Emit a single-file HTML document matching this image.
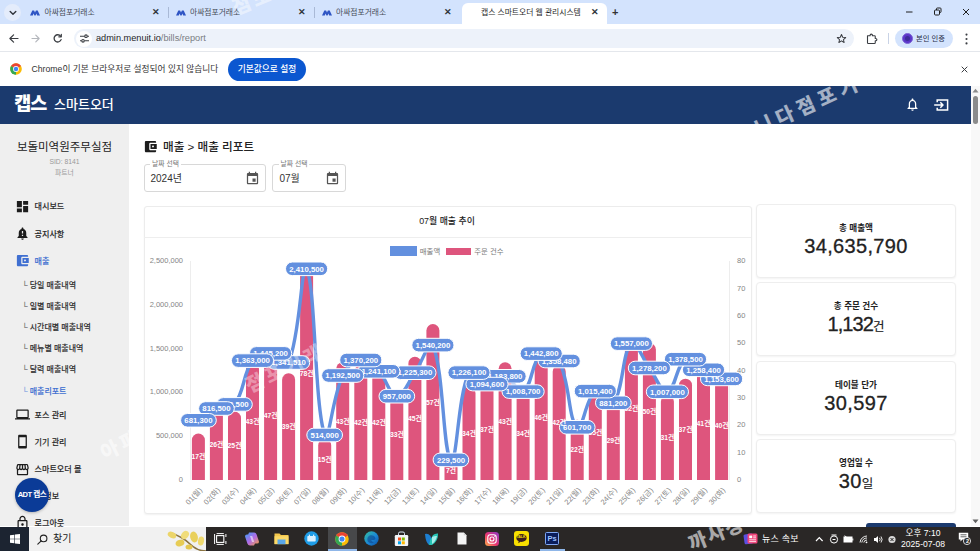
<!DOCTYPE html>
<html lang="ko">
<head>
<meta charset="utf-8">
<title>캡스 스마트오더 웹 관리시스템</title>
<style>
*{box-sizing:border-box;margin:0;padding:0}
html,body{width:980px;height:551px;overflow:hidden;background:#fff}
body{font-family:"Liberation Sans","Noto Sans CJK KR",sans-serif;color:#222;position:relative}
.abs{position:absolute}
svg{overflow:visible}
/* ---------- browser chrome ---------- */
#tabbar{left:0;top:0;width:980px;height:25px;background:#d3e3fd}
.tab{position:absolute;top:0;height:25px;font-size:7.8px;color:#474c57;line-height:25px;white-space:nowrap}
.tabx{position:absolute;top:0;height:25px;line-height:25px;font-size:8.5px;color:#30343b;font-weight:bold}
.tsep{position:absolute;top:7px;width:1px;height:11px;background:#a9b9d6}
#acttab{left:462px;top:3px;width:145px;height:22px;background:#fff;border-radius:6px 6px 0 0}
#toolbar{left:0;top:24px;width:980px;height:27px;background:#fff}
#urlpill{left:74px;top:29px;width:780px;height:19px;border-radius:10px;background:#edf2fa}
#url{left:96px;top:28px;height:21px;line-height:21px;font-size:9.2px;color:#1f1f1f;white-space:nowrap}
#url span{color:#7a7d83}
#infobar{left:0;top:51px;width:980px;height:35px;background:#fff;border-top:1px solid #e4e7ec}
#infotxt{left:31.5px;top:53px;height:33px;line-height:33px;font-size:8.7px;color:#333;white-space:nowrap}
#defbtn{left:228px;top:58px;width:78px;height:22.5px;border-radius:11.5px;background:#0b57d0;color:#fff;font-size:8.7px;line-height:22.5px;text-align:center;font-weight:500;white-space:nowrap}
#prof{left:895px;top:29px;width:58px;height:19px;border-radius:10px;background:#d3e3fd}
#proftxt{left:916px;top:29px;height:19px;line-height:19px;font-size:7.3px;color:#1d2a44;white-space:nowrap}
/* ---------- app ---------- */
#apphead{left:0;top:86px;width:971px;height:38px;background:#1b3a6e}
#logo1{left:14.3px;top:92px;font-size:18.5px;font-weight:900;color:#fff;line-height:24px;letter-spacing:-1px;font-family:"Liberation Sans","Noto Sans CJK KR",sans-serif}
#logo2{left:54px;top:94px;font-size:13px;color:#fff;line-height:22px;font-weight:500;font-family:"Liberation Sans","Noto Sans CJK KR",sans-serif}
#scroll{left:971px;top:86px;width:9px;height:440px;background:#f8f8f8}
#thumb{left:973px;top:96px;width:5px;height:28px;background:#8b8b8b;border-radius:3px}
#sidebar{left:0;top:124px;width:129px;height:402px;background:#efefef}
.sb{position:absolute;white-space:nowrap;color:#2a2a2a;transform:translateY(-50%)}
.mi{left:34.5px;font-size:8.1px;font-weight:500;-webkit-text-stroke:0.1px currentColor;line-height:12px}
.sub{left:22px;font-size:8px;font-weight:500;-webkit-text-stroke:0.1px currentColor;line-height:12px;color:#333}
.sub i{font-style:normal;font-weight:normal;color:#666;margin-right:2px}
.blue{color:#3f6fd1}
#store{left:0;top:138.5px;width:129px;text-align:center;font-size:11.5px;line-height:16px;color:#222}
#sid{left:0;top:156.7px;width:129px;text-align:center;font-size:6.8px;line-height:10px;color:#9a9a9a}
#ptn{left:0;top:167.5px;width:129px;text-align:center;font-size:6.8px;line-height:10px;color:#9a9a9a}
#adt{left:15px;top:478px;width:34px;height:34px;border-radius:17px;background:#0b3b97;color:#fff;font-size:7.6px;font-weight:bold;line-height:34px;text-align:center;letter-spacing:-0.5px;white-space:nowrap;box-shadow:0 1px 3px rgba(0,0,0,.25)}
/* content */
#h1{left:163px;top:138.4px;font-size:11.6px;line-height:17px;color:#222;white-space:nowrap;font-weight:500}
.inp{position:absolute;top:163.5px;height:28.5px;border:1px solid #d8d8d8;border-radius:3px;background:#fff}
.inlab{position:absolute;top:158.6px;font-size:6.8px;line-height:10px;color:#777;background:#fff;padding:0 2px;white-space:nowrap}
.inval{position:absolute;top:171.7px;font-size:10px;line-height:14px;color:#333;white-space:nowrap}
#ccard{left:143.5px;top:205.5px;width:608px;height:308px;border:1px solid #ececec;border-radius:3px;background:#fff;box-shadow:0 1px 2px rgba(0,0,0,.06)}
#ctitle{left:143px;top:213.6px;width:608px;text-align:center;font-size:8.9px;line-height:14px;color:#222;font-weight:500}
#cdiv{left:144px;top:236.5px;width:607px;height:1px;background:#eee}
.leg{position:absolute;top:247px;height:9px;line-height:9px;font-size:7.4px;color:#7a7a7a;white-space:nowrap}
.card{position:absolute;left:756px;width:200px;height:74px;border:1px solid #eee;border-radius:4px;background:#fff;box-shadow:0 1px 2px rgba(0,0,0,.05)}
.ct{position:absolute;left:756px;width:200px;text-align:center;font-size:8.6px;line-height:12px;color:#222;font-weight:bold;transform:translateY(-50%)}
.cv{position:absolute;left:756px;width:200px;text-align:center;font-size:20px;line-height:24px;color:#222;transform:translateY(-50%);-webkit-text-stroke:0.3px #222;white-space:nowrap;letter-spacing:.35px}
.cv small{font-size:12.5px;-webkit-text-stroke:0.15px #222;letter-spacing:0}
/* ---------- taskbar ---------- */
#taskbar{left:0;top:526.5px;width:980px;height:24.5px;background:#2a2726}
.wm{position:absolute;color:#fff;font-weight:900;white-space:nowrap;transform-origin:0 50%;pointer-events:none;font-family:"Liberation Sans","Noto Sans CJK KR",sans-serif}
</style>
</head>
<body>
<!-- browser tab strip -->
<div class="abs" id="tabbar"></div>
<div class="abs" id="acttab"></div>
<div class="tab" style="left:44.5px">아싸점포거래소</div><div class="tabx" style="left:152px">✕</div><div class="tsep" style="left:168px"></div>
<div class="tab" style="left:190px">아싸점포거래소</div><div class="tabx" style="left:298px">✕</div><div class="tsep" style="left:314px"></div>
<div class="tab" style="left:336px">아싸점포거래소</div><div class="tabx" style="left:444px">✕</div>
<div class="tab" style="left:481px;color:#1f1f1f">캡스 스마트오더 웹 관리시스템</div><div class="abs" style="left:580px;top:5px;width:11px;height:17px;background:linear-gradient(90deg,rgba(255,255,255,0),#fff)"></div><div class="tabx" style="left:591px">✕</div>
<div class="tabx" style="left:612px;font-size:11px;color:#333">+</div>
<!-- toolbar -->
<div class="abs" id="toolbar"></div>
<div class="abs" id="urlpill"></div>
<div class="abs" id="url">admin.menuit.io<span>/bills/report</span></div>
<div class="abs" id="prof"></div>
<div class="abs" id="proftxt">본인 인증</div>
<!-- infobar -->
<div class="abs" id="infobar"></div>
<div class="abs" id="infotxt">Chrome이 기본 브라우저로 설정되어 있지 않습니다</div>
<div class="abs" id="defbtn">기본값으로 설정</div>
<!-- app header -->
<div class="abs" id="apphead"></div>
<div class="abs" id="logo1">캡스</div>
<div class="abs" id="logo2">스마트오더</div>
<div class="abs" id="scroll"></div>
<div class="abs" id="thumb"></div>
<!-- sidebar -->
<div class="abs" id="sidebar"></div>
<div class="abs" id="store">보돌미역원주무실점</div>
<div class="abs" id="sid">SID: 8141</div>
<div class="abs" id="ptn">파트너</div>
<div class="sb mi" style="top:207px">대시보드</div>
<div class="sb mi" style="top:235px">공지사항</div>
<div class="sb mi blue" style="top:262px">매출</div>
<div class="sb sub" style="top:286.2px"><i>└</i>당일 매출내역</div>
<div class="sb sub" style="top:307.2px"><i>└</i>일별 매출내역</div>
<div class="sb sub" style="top:328px"><i>└</i>시간대별 매출내역</div>
<div class="sb sub" style="top:348.8px"><i>└</i>메뉴별 매출내역</div>
<div class="sb sub" style="top:370px"><i>└</i>달력 매출내역</div>
<div class="sb sub blue" style="top:391.6px"><i style="color:#7d9fe0">└</i>매출리포트</div>
<div class="sb mi" style="top:415.5px">포스 관리</div>
<div class="sb mi" style="top:442.7px">기기 관리</div>
<div class="sb mi" style="top:470px">스마트오더 몰</div>
<div class="sb mi" style="top:497px">내 정보</div>
<div class="sb mi" style="top:524px">로그아웃</div>
<div class="abs" id="adt">ADT 캡스</div>
<!-- content -->
<div class="abs" id="h1">매출 &gt; 매출 리포트</div>
<div class="inp" style="left:143.5px;width:122px"></div>
<div class="inlab" style="left:150px">날짜 선택</div>
<div class="inval" style="left:150.5px">2024년</div>
<div class="inp" style="left:272px;width:73.5px"></div>
<div class="inlab" style="left:278.5px">날짜 선택</div>
<div class="inval" style="left:279.5px">07월</div>
<div class="abs" id="ccard"></div>
<div class="abs" id="ctitle">07월 매출 추이</div>
<div class="abs" id="cdiv"></div>
<div class="abs" style="left:390.2px;top:246.3px;width:27px;height:10px;background:#6390df"></div>
<div class="leg" style="left:419.8px">매출액</div>
<div class="abs" style="left:446.1px;top:248px;width:24.5px;height:7.3px;background:#de557d"></div>
<div class="leg" style="left:474.3px">주문 건수</div>
<svg class="abs" id="chart" style="left:0;top:0" width="980" height="551" viewBox="0 0 980 551" font-family="Liberation Sans, Noto Sans CJK KR, sans-serif">
<line x1="190.5" y1="261" x2="190.5" y2="480" stroke="#ededed" stroke-width="1"/>
<line x1="729.5" y1="261" x2="729.5" y2="480" stroke="#ededed" stroke-width="1"/>
<g font-size="7.5" fill="#858585" text-anchor="end">
<text x="183" y="481.9">0</text>
<text x="183" y="438.1">500,000</text>
<text x="183" y="394.3">1,000,000</text>
<text x="183" y="350.5">1,500,000</text>
<text x="183" y="306.7">2,000,000</text>
<text x="183" y="262.9">2,500,000</text>
</g>
<g font-size="7.5" fill="#858585" text-anchor="start">
<text x="737" y="482.2">0</text>
<text x="737" y="454.8">10</text>
<text x="737" y="427.4">20</text>
<text x="737" y="400.1">30</text>
<text x="737" y="372.7">40</text>
<text x="737" y="345.3">50</text>
<text x="737" y="317.9">60</text>
<text x="737" y="290.6">70</text>
<text x="737" y="263.2">80</text>
</g>
<g fill="#de557d">
<path d="M191.9 480.0 V440.0 A6.5 6.5 0 0 1 204.9 440.0 V480.0 Z"/>
<path d="M209.9 480.0 V415.3 A6.5 6.5 0 0 1 222.9 415.3 V480.0 Z"/>
<path d="M228.0 480.0 V418.1 A6.5 6.5 0 0 1 241.0 418.1 V480.0 Z"/>
<path d="M246.0 480.0 V368.8 A6.5 6.5 0 0 1 259.0 368.8 V480.0 Z"/>
<path d="M264.1 480.0 V357.8 A6.5 6.5 0 0 1 277.1 357.8 V480.0 Z"/>
<path d="M282.1 480.0 V379.7 A6.5 6.5 0 0 1 295.1 379.7 V480.0 Z"/>
<path d="M300.1 480.0 V273.0 A6.5 6.5 0 0 1 313.1 273.0 V480.0 Z"/>
<path d="M318.2 480.0 V445.4 A6.5 6.5 0 0 1 331.2 445.4 V480.0 Z"/>
<path d="M336.2 480.0 V368.8 A6.5 6.5 0 0 1 349.2 368.8 V480.0 Z"/>
<path d="M354.3 480.0 V371.5 A6.5 6.5 0 0 1 367.3 371.5 V480.0 Z"/>
<path d="M372.3 480.0 V371.5 A6.5 6.5 0 0 1 385.3 371.5 V480.0 Z"/>
<path d="M390.3 480.0 V396.2 A6.5 6.5 0 0 1 403.3 396.2 V480.0 Z"/>
<path d="M408.4 480.0 V363.3 A6.5 6.5 0 0 1 421.4 363.3 V480.0 Z"/>
<path d="M426.4 480.0 V330.5 A6.5 6.5 0 0 1 439.4 330.5 V480.0 Z"/>
<path d="M444.5 480.0 V467.3 A6.5 6.5 0 0 1 457.5 467.3 V480.0 Z"/>
<path d="M462.5 480.0 V393.4 A6.5 6.5 0 0 1 475.5 393.4 V480.0 Z"/>
<path d="M480.5 480.0 V385.2 A6.5 6.5 0 0 1 493.5 385.2 V480.0 Z"/>
<path d="M498.6 480.0 V368.8 A6.5 6.5 0 0 1 511.6 368.8 V480.0 Z"/>
<path d="M516.6 480.0 V393.4 A6.5 6.5 0 0 1 529.6 393.4 V480.0 Z"/>
<path d="M534.7 480.0 V360.6 A6.5 6.5 0 0 1 547.7 360.6 V480.0 Z"/>
<path d="M552.7 480.0 V371.5 A6.5 6.5 0 0 1 565.7 371.5 V480.0 Z"/>
<path d="M570.7 480.0 V426.3 A6.5 6.5 0 0 1 583.7 426.3 V480.0 Z"/>
<path d="M588.8 480.0 V390.7 A6.5 6.5 0 0 1 601.8 390.7 V480.0 Z"/>
<path d="M606.8 480.0 V407.1 A6.5 6.5 0 0 1 619.8 407.1 V480.0 Z"/>
<path d="M624.9 480.0 V344.1 A6.5 6.5 0 0 1 637.9 344.1 V480.0 Z"/>
<path d="M642.9 480.0 V349.6 A6.5 6.5 0 0 1 655.9 349.6 V480.0 Z"/>
<path d="M660.9 480.0 V401.6 A6.5 6.5 0 0 1 673.9 401.6 V480.0 Z"/>
<path d="M679.0 480.0 V385.2 A6.5 6.5 0 0 1 692.0 385.2 V480.0 Z"/>
<path d="M697.0 480.0 V374.3 A6.5 6.5 0 0 1 710.0 374.3 V480.0 Z"/>
<path d="M715.1 480.0 V377.0 A6.5 6.5 0 0 1 728.1 377.0 V480.0 Z"/>
</g>
<path d="M198.4 420.3 C205.6 415.6 208.7 411.9 216.4 408.5 C223.1 405.5 230.4 409.8 234.5 404.4 C244.9 390.7 242.3 375.1 252.5 360.6 C256.7 354.7 263.5 353.0 270.6 353.4 C277.9 353.8 286.1 368.4 288.6 362.5 C300.5 334.6 301.4 261.0 306.6 268.8 C315.8 287.3 314.2 403.9 324.7 435.0 C328.6 446.5 332.3 397.2 342.7 375.5 C346.7 367.2 353.1 360.9 360.8 360.0 C367.6 359.2 372.9 365.4 378.8 371.3 C387.3 379.8 389.5 395.9 396.8 396.2 C403.9 396.4 408.0 382.3 414.9 372.7 C422.5 361.9 429.7 337.4 432.9 345.1 C444.2 372.3 442.8 453.7 451.0 459.9 C457.2 464.7 457.4 397.0 469.0 372.6 C471.8 366.7 479.5 383.3 487.0 384.1 C493.9 384.8 498.5 374.9 505.1 376.3 C513.0 377.9 517.9 394.9 523.1 391.6 C532.4 385.8 531.3 362.0 541.2 353.6 C545.7 349.7 556.0 354.5 559.2 361.0 C570.4 384.0 568.2 419.7 577.2 427.3 C582.6 431.7 585.9 397.4 595.3 391.1 C600.3 387.7 609.6 407.7 613.3 402.8 C624.0 388.7 621.7 352.9 631.4 343.6 C636.1 339.0 642.1 358.3 649.4 368.0 C656.6 377.6 661.0 393.4 667.4 391.8 C675.5 389.8 676.2 364.9 685.5 359.2 C690.7 356.1 696.2 365.8 703.5 369.8 C710.6 373.6 714.3 375.3 721.6 378.9" fill="none" stroke="#6390df" stroke-width="3.4" stroke-linejoin="round" stroke-linecap="round"/>
<g font-size="7.5" fill="#858585" text-anchor="end">
<text transform="translate(202.6,490.5) rotate(-47)">01(월)</text>
<text transform="translate(220.6,490.5) rotate(-47)">02(화)</text>
<text transform="translate(238.7,490.5) rotate(-47)">03(수)</text>
<text transform="translate(256.7,490.5) rotate(-47)">04(목)</text>
<text transform="translate(274.8,490.5) rotate(-47)">05(금)</text>
<text transform="translate(292.8,490.5) rotate(-47)">06(토)</text>
<text transform="translate(310.8,490.5) rotate(-47)">07(일)</text>
<text transform="translate(328.9,490.5) rotate(-47)">08(월)</text>
<text transform="translate(346.9,490.5) rotate(-47)">09(화)</text>
<text transform="translate(365.0,490.5) rotate(-47)">10(수)</text>
<text transform="translate(383.0,490.5) rotate(-47)">11(목)</text>
<text transform="translate(401.0,490.5) rotate(-47)">12(금)</text>
<text transform="translate(419.1,490.5) rotate(-47)">13(토)</text>
<text transform="translate(437.1,490.5) rotate(-47)">14(일)</text>
<text transform="translate(455.2,490.5) rotate(-47)">15(월)</text>
<text transform="translate(473.2,490.5) rotate(-47)">16(화)</text>
<text transform="translate(491.2,490.5) rotate(-47)">17(수)</text>
<text transform="translate(509.3,490.5) rotate(-47)">18(목)</text>
<text transform="translate(527.3,490.5) rotate(-47)">19(금)</text>
<text transform="translate(545.4,490.5) rotate(-47)">20(토)</text>
<text transform="translate(563.4,490.5) rotate(-47)">21(일)</text>
<text transform="translate(581.4,490.5) rotate(-47)">22(월)</text>
<text transform="translate(599.5,490.5) rotate(-47)">23(화)</text>
<text transform="translate(617.5,490.5) rotate(-47)">24(수)</text>
<text transform="translate(635.6,490.5) rotate(-47)">25(목)</text>
<text transform="translate(653.6,490.5) rotate(-47)">26(금)</text>
<text transform="translate(671.6,490.5) rotate(-47)">27(토)</text>
<text transform="translate(689.7,490.5) rotate(-47)">28(일)</text>
<text transform="translate(707.7,490.5) rotate(-47)">29(월)</text>
<text transform="translate(725.8,490.5) rotate(-47)">30(화)</text>
</g>
<g font-size="7.8" font-weight="bold" fill="#fff" text-anchor="middle">
<text x="721.6" y="427.8" font-size="6.8">40건</text>
<rect x="700.5" y="372.1" width="42.2" height="13.6" rx="6.8" fill="#6390df" stroke="#fff" stroke-width="1"/>
<text x="721.6" y="381.6">1,153,600</text>
<text x="703.5" y="426.4" font-size="6.8">41건</text>
<rect x="682.4" y="363.0" width="42.2" height="13.6" rx="6.8" fill="#6390df" stroke="#fff" stroke-width="1"/>
<text x="703.5" y="372.5">1,258,400</text>
<text x="685.5" y="431.9" font-size="6.8">37건</text>
<rect x="664.4" y="352.4" width="42.2" height="13.6" rx="6.8" fill="#6390df" stroke="#fff" stroke-width="1"/>
<text x="685.5" y="361.9">1,378,500</text>
<text x="667.4" y="440.1" font-size="6.8">31건</text>
<rect x="646.3" y="385.0" width="42.2" height="13.6" rx="6.8" fill="#6390df" stroke="#fff" stroke-width="1"/>
<text x="667.4" y="394.5">1,007,000</text>
<text x="649.4" y="414.1" font-size="6.8">50건</text>
<rect x="628.3" y="361.2" width="42.2" height="13.6" rx="6.8" fill="#6390df" stroke="#fff" stroke-width="1"/>
<text x="649.4" y="370.7">1,278,200</text>
<text x="631.4" y="411.3" font-size="6.8">52건</text>
<rect x="610.3" y="336.8" width="42.2" height="13.6" rx="6.8" fill="#6390df" stroke="#fff" stroke-width="1"/>
<text x="631.4" y="346.3">1,557,000</text>
<text x="613.3" y="442.8" font-size="6.8">29건</text>
<rect x="595.5" y="396.0" width="35.7" height="13.6" rx="6.8" fill="#6390df" stroke="#fff" stroke-width="1"/>
<text x="613.3" y="405.5">881,200</text>
<text x="595.3" y="434.6" font-size="6.8">35건</text>
<rect x="574.2" y="384.3" width="42.2" height="13.6" rx="6.8" fill="#6390df" stroke="#fff" stroke-width="1"/>
<text x="595.3" y="393.8">1,015,400</text>
<text x="577.2" y="452.4" font-size="6.8">22건</text>
<rect x="559.4" y="420.5" width="35.7" height="13.6" rx="6.8" fill="#6390df" stroke="#fff" stroke-width="1"/>
<text x="577.2" y="430.0">601,700</text>
<text x="559.2" y="425.0" font-size="6.8">42건</text>
<rect x="538.1" y="354.2" width="42.2" height="13.6" rx="6.8" fill="#6390df" stroke="#fff" stroke-width="1"/>
<text x="559.2" y="363.7">1,358,480</text>
<text x="541.2" y="419.5" font-size="6.8">46건</text>
<rect x="520.1" y="346.8" width="42.2" height="13.6" rx="6.8" fill="#6390df" stroke="#fff" stroke-width="1"/>
<text x="541.2" y="356.3">1,442,800</text>
<text x="523.1" y="436.0" font-size="6.8">34건</text>
<rect x="502.0" y="384.8" width="42.2" height="13.6" rx="6.8" fill="#6390df" stroke="#fff" stroke-width="1"/>
<text x="523.1" y="394.3">1,008,700</text>
<text x="505.1" y="423.6" font-size="6.8">43건</text>
<rect x="484.0" y="369.5" width="42.2" height="13.6" rx="6.8" fill="#6390df" stroke="#fff" stroke-width="1"/>
<text x="505.1" y="379.0">1,183,800</text>
<text x="487.0" y="431.9" font-size="6.8">37건</text>
<rect x="465.9" y="377.3" width="42.2" height="13.6" rx="6.8" fill="#6390df" stroke="#fff" stroke-width="1"/>
<text x="487.0" y="386.8">1,094,600</text>
<text x="469.0" y="436.0" font-size="6.8">34건</text>
<rect x="447.9" y="365.8" width="42.2" height="13.6" rx="6.8" fill="#6390df" stroke="#fff" stroke-width="1"/>
<text x="469.0" y="375.3">1,226,100</text>
<text x="451.0" y="472.9" font-size="6.8">7건</text>
<rect x="433.1" y="453.1" width="35.7" height="13.6" rx="6.8" fill="#6390df" stroke="#fff" stroke-width="1"/>
<text x="451.0" y="462.6">229,500</text>
<text x="432.9" y="404.5" font-size="6.8">57건</text>
<rect x="411.8" y="338.3" width="42.2" height="13.6" rx="6.8" fill="#6390df" stroke="#fff" stroke-width="1"/>
<text x="432.9" y="347.8">1,540,200</text>
<text x="414.9" y="420.9" font-size="6.8">45건</text>
<rect x="393.8" y="365.9" width="42.2" height="13.6" rx="6.8" fill="#6390df" stroke="#fff" stroke-width="1"/>
<text x="414.9" y="375.4">1,225,300</text>
<text x="396.8" y="437.3" font-size="6.8">33건</text>
<rect x="379.0" y="389.4" width="35.7" height="13.6" rx="6.8" fill="#6390df" stroke="#fff" stroke-width="1"/>
<text x="396.8" y="398.9">957,000</text>
<text x="378.8" y="425.0" font-size="6.8">42건</text>
<rect x="357.7" y="364.5" width="42.2" height="13.6" rx="6.8" fill="#6390df" stroke="#fff" stroke-width="1"/>
<text x="378.8" y="374.0">1,241,100</text>
<text x="360.8" y="425.0" font-size="6.8">42건</text>
<rect x="339.7" y="353.2" width="42.2" height="13.6" rx="6.8" fill="#6390df" stroke="#fff" stroke-width="1"/>
<text x="360.8" y="362.7">1,370,200</text>
<text x="342.7" y="423.6" font-size="6.8">43건</text>
<rect x="321.6" y="368.7" width="42.2" height="13.6" rx="6.8" fill="#6390df" stroke="#fff" stroke-width="1"/>
<text x="342.7" y="378.2">1,192,500</text>
<text x="324.7" y="462.0" font-size="6.8">15건</text>
<rect x="306.8" y="428.2" width="35.7" height="13.6" rx="6.8" fill="#6390df" stroke="#fff" stroke-width="1"/>
<text x="324.7" y="437.7">514,000</text>
<text x="306.6" y="375.7" font-size="6.8">78건</text>
<rect x="285.5" y="262.0" width="42.2" height="13.6" rx="6.8" fill="#6390df" stroke="#fff" stroke-width="1"/>
<text x="306.6" y="271.5">2,410,500</text>
<text x="288.6" y="429.1" font-size="6.8">39건</text>
<rect x="267.5" y="355.7" width="42.2" height="13.6" rx="6.8" fill="#6390df" stroke="#fff" stroke-width="1"/>
<text x="288.6" y="365.2">1,341,510</text>
<text x="270.6" y="418.2" font-size="6.8">47건</text>
<rect x="249.5" y="346.6" width="42.2" height="13.6" rx="6.8" fill="#6390df" stroke="#fff" stroke-width="1"/>
<text x="270.6" y="356.1">1,445,200</text>
<text x="252.5" y="423.6" font-size="6.8">43건</text>
<rect x="231.4" y="353.8" width="42.2" height="13.6" rx="6.8" fill="#6390df" stroke="#fff" stroke-width="1"/>
<text x="252.5" y="363.3">1,363,000</text>
<text x="234.5" y="448.3" font-size="6.8">25건</text>
<rect x="216.6" y="397.6" width="35.7" height="13.6" rx="6.8" fill="#6390df" stroke="#fff" stroke-width="1"/>
<text x="234.5" y="407.1">862,500</text>
<text x="216.4" y="446.9" font-size="6.8">26건</text>
<rect x="198.6" y="401.7" width="35.7" height="13.6" rx="6.8" fill="#6390df" stroke="#fff" stroke-width="1"/>
<text x="216.4" y="411.2">816,500</text>
<text x="198.4" y="459.2" font-size="6.8">17건</text>
<rect x="180.6" y="413.5" width="35.7" height="13.6" rx="6.8" fill="#6390df" stroke="#fff" stroke-width="1"/>
<text x="198.4" y="423.0">681,300</text>
</g>
</svg>
<div class="card" style="top:204px"></div>
<div class="ct" style="top:228px">총 매출액</div>
<div class="cv" style="top:246px">34,635,790</div>
<div class="card" style="top:282px"></div>
<div class="ct" style="top:306px">총 주문 건수</div>
<div class="cv" style="top:324.5px"><span style="letter-spacing:-.9px">1,132</span><small>건</small></div>
<div class="card" style="top:361px"></div>
<div class="ct" style="top:385px">테이블 단가</div>
<div class="cv" style="top:403px">30,597</div>
<div class="card" style="top:439px"></div>
<div class="ct" style="top:463px">영업일 수</div>
<div class="cv" style="top:481.5px">30<small>일</small></div>
<!-- taskbar -->
<div class="abs" id="taskbar"></div>
<!-- ===== tab strip icons ===== -->
<div class="abs" style="left:4px;top:4px;width:17px;height:17px;border-radius:9px;background:#e4ecfb"></div>
<svg class="abs" style="left:8.5px;top:9.5px" width="8" height="6" viewBox="0 0 8 6"><path d="M1.2 1.5 L4 4.2 L6.8 1.5" fill="none" stroke="#30343b" stroke-width="1.4" stroke-linecap="round" stroke-linejoin="round"/></svg>
<svg class="abs" style="left:29.5px;top:9.5px" width="10" height="6" viewBox="0 0 10 6"><path d="M0 5.5 L2.3 .4 H4.1 L5 2.4 L5.9 .4 H7.7 L10 5.5 H7.2 L6.4 3.6 L5.6 5.5 H4.4 L3.6 3.6 L2.8 5.5 Z" fill="#2f55c4"/></svg>
<svg class="abs" style="left:175.5px;top:9.5px" width="10" height="6" viewBox="0 0 10 6"><path d="M0 5.5 L2.3 .4 H4.1 L5 2.4 L5.9 .4 H7.7 L10 5.5 H7.2 L6.4 3.6 L5.6 5.5 H4.4 L3.6 3.6 L2.8 5.5 Z" fill="#2f55c4"/></svg>
<svg class="abs" style="left:321.5px;top:9.5px" width="10" height="6" viewBox="0 0 10 6"><path d="M0 5.5 L2.3 .4 H4.1 L5 2.4 L5.9 .4 H7.7 L10 5.5 H7.2 L6.4 3.6 L5.6 5.5 H4.4 L3.6 3.6 L2.8 5.5 Z" fill="#2f55c4"/></svg>
<!-- window controls -->
<svg class="abs" style="left:900px;top:4px" width="76" height="16" viewBox="0 0 76 16" fill="none" stroke="#1f1f1f" stroke-width="1">
<path d="M6 8 H12.5"/>
<rect x="34.5" y="6" width="5" height="5" rx="1"/><path d="M36.5 6 V4.8 a.8 .8 0 0 1 .8 -.8 H40.2 a.8 .8 0 0 1 .8 .8 V7.7 a.8 .8 0 0 1 -.8 .8 H39.5" />
<path d="M63 5 L69 11 M69 5 L63 11"/>
</svg>
<!-- ===== toolbar icons ===== -->
<svg class="abs" style="left:8px;top:32px" width="60" height="13" viewBox="0 0 60 13" fill="none" stroke-width="1.2" stroke-linecap="round" stroke-linejoin="round">
<path d="M10 6.5 H2 M5.6 2.8 L1.9 6.5 L5.6 10.2" stroke="#3a3d42"/>
<path d="M24 6.5 H31 M27.8 3.2 L31.1 6.5 L27.8 9.8" stroke="#b4b7bc"/>
<path d="M52.6 4.2 A3.6 3.6 0 1 0 53.1 7.6" stroke="#3a3d42" stroke-width="1.3"/><path d="M53.3 2.3 V4.8 H50.8" stroke="#3a3d42" stroke-width="1.2"/>
</svg>
<div class="abs" style="left:76px;top:30.5px;width:16px;height:16px;border-radius:8px;background:#fff"></div>
<svg class="abs" style="left:79.5px;top:34px" width="9" height="9" viewBox="0 0 9 9" fill="none" stroke="#3a3d42" stroke-width="1.1">
<path d="M0 2.2 H4.5 M7.6 2.2 H9 M0 6.8 H1.4 M4.5 6.8 H9"/><circle cx="6" cy="2.2" r="1.3"/><circle cx="3" cy="6.8" r="1.3"/>
</svg>
<svg class="abs" style="left:835.5px;top:33px" width="11" height="11" viewBox="0 0 24 24"><path d="M12 3.2 L14.6 9.3 L21.2 9.9 L16.2 14.2 L17.7 20.7 L12 17.2 L6.3 20.7 L7.8 14.2 L2.8 9.9 L9.4 9.3 Z" fill="none" stroke="#3a3d42" stroke-width="2.2" stroke-linejoin="round"/></svg>
<svg class="abs" style="left:866px;top:32.5px" width="11" height="11.5" viewBox="0 0 22 23"><path d="M3 5.5 H8.2 V4.6 a2.3 2.3 0 0 1 4.6 0 V5.5 H17 a1.5 1.5 0 0 1 1.5 1.5 V11 H19.4 a2.3 2.3 0 0 1 0 4.6 H18.5 V19.5 a1.5 1.5 0 0 1 -1.5 1.5 H4.5 a1.5 1.5 0 0 1 -1.5 -1.5 Z" fill="none" stroke="#3a3d42" stroke-width="2.2" stroke-linejoin="round"/></svg>
<div class="abs" style="left:888px;top:33px;width:1px;height:11px;background:#c9d3e6"></div>
<div class="abs" style="left:901.5px;top:33px;width:11px;height:11px;border-radius:6px;background:#5a35c8;border:1px solid #7d63d8"></div>
<div class="abs" style="left:904.5px;top:36px;width:5px;height:5px;border-radius:3px;background:#3d2b9a"></div>
<svg class="abs" style="left:964.5px;top:32.5px" width="3" height="12" viewBox="0 0 3 12" fill="#3a3d42"><circle cx="1.5" cy="1.6" r="1.05"/><circle cx="1.5" cy="6" r="1.05"/><circle cx="1.5" cy="10.4" r="1.05"/></svg>
<!-- ===== infobar icons ===== -->
<svg class="abs" style="left:9.5px;top:63px" width="12" height="12" viewBox="-6 -6 12 12">
<circle r="5.8" fill="#fbbc05"/>
<path d="M0 0 L-5.02 -2.9 A5.8 5.8 0 0 1 5.02 -2.9 Z" fill="#ea4335"/>
<path d="M0 0 L-5.02 -2.9 A5.8 5.8 0 0 0 0 5.8 Z" fill="#34a853"/>
<circle r="2.9" fill="#fff"/><circle r="2.2" fill="#4285f4"/>
</svg>
<svg class="abs" style="left:960.5px;top:65.5px" width="7" height="7" viewBox="0 0 7 7"><path d="M.7 .7 L6.3 6.3 M6.3 .7 L.7 6.3" stroke="#3a3d42" stroke-width="1" fill="none"/></svg>
<!-- ===== app header icons ===== -->
<svg class="abs" style="left:904.9px;top:97.3px" width="15" height="15" viewBox="0 0 24 24" fill="#fff"><path d="M12 22c1.1 0 2-.9 2-2h-4c0 1.1.9 2 2 2zm6-6v-5c0-3.07-1.63-5.64-4.5-6.32V4c0-.83-.67-1.5-1.5-1.5s-1.5.67-1.5 1.5v.68C7.64 5.36 6 7.92 6 11v5l-2 2v1h16v-1l-2-2zm-2 1H8v-6c0-2.48 1.51-4.5 4-4.5s4 2.02 4 4.5v6z"/></svg>
<svg class="abs" style="left:933px;top:97.5px" width="16" height="14" viewBox="0 0 16 14" fill="none" stroke="#fff" stroke-width="1.5"><path d="M4.2 4.2 V2 H14.6 V12 H4.2 V9.8"/><path d="M1.2 7 H10 M7.3 4.3 L10 7 L7.3 9.7" stroke-linejoin="round"/></svg>
<!-- scrollbar arrows -->
<svg class="abs" style="left:972px;top:88px" width="7" height="5" viewBox="0 0 7 5"><path d="M.5 4.5 L3.5 .8 L6.5 4.5 Z" fill="#8b8b8b"/></svg>
<svg class="abs" style="left:972px;top:518.5px" width="7" height="5" viewBox="0 0 7 5"><path d="M.5 .5 L3.5 4.2 L6.5 .5 Z" fill="#606060"/></svg>
<!-- ===== sidebar icons ===== -->
<svg class="abs" style="left:14.5px;top:198.8px" width="15" height="15" viewBox="0 0 24 24" fill="#1c1c1c"><path d="M3 13h8V3H3v10zm0 8h8v-6H3v6zm10 0h8V11h-8v10zm0-18v6h8V3h-8z"/></svg>
<svg class="abs" style="left:14.5px;top:226.4px" width="15" height="15" viewBox="0 0 24 24" fill="#1c1c1c"><path d="M18 16v-5c0-3.07-1.64-5.64-4.5-6.32V4c0-.83-.67-1.5-1.5-1.5s-1.500.67-1.500 1.500v.68C7.630 5.360 6 7.920 6 11v5l-2 2v1h16v-1l-2-2zm-5 0h-2v-2h2v2zm0-4h-2V8h2v4zm-1 10c1.100 0 2-.9 2-2h-4c0 1.100.89 2 2 2z"/></svg>
<svg class="abs" style="left:14.5px;top:253.4px" width="15" height="15" viewBox="0 0 24 24" fill="#3f6fd1"><path d="M21 18v1c0 1.100-.9 2-2 2H5c-1.110 0-2-.9-2-2V5c0-1.100.89-2 2-2h14c1.100 0 2 .9 2 2v1h-9c-1.110 0-2 .9-2 2v8c0 1.100.89 2 2 2h9zm-9-2h10V8H12v8zm4-2.500c-.83 0-1.500-.67-1.500-1.500s.67-1.500 1.500-1.500 1.500.67 1.500 1.500-.67 1.500-1.500 1.500z"/></svg>
<svg class="abs" style="left:14.5px;top:407.2px" width="15" height="15" viewBox="0 0 24 24" fill="#1c1c1c"><path d="M20 18c1.100 0 2-.9 2-2V6c0-1.100-.9-2-2-2H4c-1.100 0-2 .9-2 2v10c0 1.100.9 2 2 2H0v2h24v-2h-4zM4 6h16v10H4V6z"/></svg>
<svg class="abs" style="left:14.5px;top:434.4px" width="15" height="15" viewBox="0 0 24 24" fill="#1c1c1c"><path d="M17 1.010 7 1c-1.100 0-2 .9-2 2v18c0 1.100.9 2 2 2h10c1.100 0 2-.9 2-2V3c0-1.100-.9-1.990-2-1.990zM17 19H7V5h10v14z"/></svg>
<svg class="abs" style="left:14.5px;top:461.8px" width="15" height="15" viewBox="0 0 24 24" fill="#1c1c1c"><path d="M21.900 8.890l-1.050-4.370c-.22-.9-1-1.520-1.910-1.520H5.050c-.9 0-1.690.63-1.900 1.520L2.100 8.890c-.24 1.020-.02 2.060.62 2.880.08.110.19.190.28.290V19c0 1.100.9 2 2 2h14c1.100 0 2-.9 2-2v-6.940c.09-.09.200-.18.280-.28.640-.82.870-1.870.62-2.890zm-2.990-3.900l1.050 4.370c.1.420.010.840-.25 1.170-.14.180-.44.470-.94.470-.61 0-1.140-.49-1.210-1.140L16.980 5l1.930-.01zM13 5h1.960l.54 4.520c.05.390-.07.780-.33 1.070-.22.260-.54.410-.95.410-.67 0-1.220-.59-1.220-1.310V5zM8.490 9.520L9.040 5H11v4.690c0 .72-.55 1.310-1.290 1.310-.34 0-.65-.15-.89-.41-.25-.29-.37-.68-.33-1.070zm-4.450-.16L5.050 5h1.970l-.58 4.860c-.08.650-.6 1.140-1.210 1.140-.49 0-.8-.29-.93-.47-.27-.32-.36-.75-.26-1.170zM5 19v-6.030c.08.010.15.030.23.030.87 0 1.660-.36 2.240-.95.600.6 1.400.95 2.310.95.870 0 1.650-.36 2.230-.93.590.57 1.390.93 2.290.93.840 0 1.640-.35 2.240-.95.580.59 1.370.95 2.240.95.080 0 .15-.02.230-.03V19H5z"/></svg>
<svg class="abs" style="left:14.5px;top:514.8px" width="15" height="15" viewBox="0 0 24 24" fill="#1c1c1c"><path d="M18 8h-1V6c0-2.760-2.240-5-5-5S7 3.240 7 6v2H6c-1.100 0-2 .9-2 2v10c0 1.100.9 2 2 2h12c1.100 0 2-.9 2-2V10c0-1.100-.9-2-2-2zM9 6c0-1.660 1.340-3 3-3s3 1.340 3 3v2H9V6zm9 14H6V10h12v10zm-6-3c1.100 0 2-.9 2-2s-.9-2-2-2-2 .9-2 2 .9 2 2 2z"/></svg>
<!-- ===== content icons ===== -->
<svg class="abs" style="left:143.1px;top:139.3px" width="15" height="15" viewBox="0 0 24 24" fill="#1c1c1c"><path d="M21 18v1c0 1.100-.9 2-2 2H5c-1.110 0-2-.9-2-2V5c0-1.100.89-2 2-2h14c1.100 0 2 .9 2 2v1h-9c-1.110 0-2 .9-2 2v8c0 1.100.89 2 2 2h9zm-9-2h10V8H12v8zm4-2.500c-.83 0-1.500-.67-1.500-1.500s.67-1.500 1.500-1.500 1.500.67 1.500 1.500-.67 1.500-1.500 1.500z"/></svg>
<svg class="abs" style="left:244.9px;top:170.6px" width="15" height="15" viewBox="0 0 24 24" fill="#555"><path d="M17 12h-5v5h5v-5zM16 1v2H8V1H6v2H5c-1.110 0-1.990.9-1.990 2L3 19c0 1.100.89 2 2 2h14c1.100 0 2-.9 2-2V5c0-1.100-.9-2-2-2h-1V1h-2zm3 18H5V8h14v11z"/></svg>
<svg class="abs" style="left:324.6px;top:170.6px" width="15" height="15" viewBox="0 0 24 24" fill="#555"><path d="M17 12h-5v5h5v-5zM16 1v2H8V1H6v2H5c-1.110 0-1.990.9-1.990 2L3 19c0 1.100.89 2 2 2h14c1.100 0 2-.9 2-2V5c0-1.100-.9-2-2-2h-1V1h-2zm3 18H5V8h14v11z"/></svg>
<!-- ===== taskbar ===== -->
<div class="abs" style="left:0;top:526.5px;width:29px;height:24.5px;background:#1c2431"></div>
<svg class="abs" style="left:10px;top:534px" width="10" height="10" viewBox="0 0 10 10" fill="#fff"><path d="M0 1.3 L4.4 .7 V4.7 H0 Z M5 .6 L10 0 V4.7 H5 Z M0 5.3 H4.4 V9.3 L0 8.7 Z M5 5.3 H10 V10 L5 9.4 Z"/></svg>
<div class="abs" style="left:29px;top:526.5px;width:177px;height:24.5px;background:#f1f1f1"></div>
<svg class="abs" style="left:36.5px;top:533.5px" width="11" height="11" viewBox="0 0 11 11" fill="none" stroke="#222" stroke-width="1.1"><circle cx="6.6" cy="4.4" r="3.3"/><path d="M4.2 6.8 L.8 10.2" stroke-linecap="round"/></svg>
<div class="abs" style="left:53px;top:531px;font-size:10px;line-height:15px;color:#222;white-space:nowrap">찾기</div>
<svg class="abs" style="left:163px;top:526.5px" width="43" height="24.5" viewBox="0 0 43 24.5">
<path d="M8 6 Q20 10 27 17 T43 24" fill="none" stroke="#8a7340" stroke-width="1.6"/>
<ellipse cx="9" cy="8" rx="4.5" ry="3" fill="#ecd56a" transform="rotate(25 9 8)"/>
<ellipse cx="17" cy="16" rx="4.5" ry="3.2" fill="#e7cc55" transform="rotate(-20 17 16)"/>
<ellipse cx="22" cy="8" rx="4.5" ry="3.5" fill="#f0dc7a" transform="rotate(-50 22 8)"/>
<ellipse cx="31" cy="10" rx="3.8" ry="5.5" fill="#e9d05c" transform="rotate(-15 31 10)"/>
<ellipse cx="38" cy="14" rx="3" ry="4.5" fill="#efd96f" transform="rotate(10 38 14)"/>
<ellipse cx="26" cy="20" rx="3.5" ry="2.5" fill="#e4c74e"/>
</svg>
<!-- task view -->
<svg class="abs" style="left:213.5px;top:533px" width="13" height="12" viewBox="0 0 13 12" fill="none" stroke="#fff" stroke-width="1.1"><rect x="2.6" y="2.6" width="7.2" height="6.8"/><path d="M.6 1 V11 M11.9 1 V4 M11.9 8 V11 M2.6 .6 H9.8 M2.6 11.4 H9.8" stroke-width="1"/></svg>
<!-- copilot -->
<svg class="abs" style="left:243.5px;top:531px" width="16" height="16" viewBox="0 0 16 16"><defs><linearGradient id="cp1" x1="0" y1="0" x2="1" y2="1"><stop offset="0" stop-color="#3aa0f5"/><stop offset=".5" stop-color="#b06be8"/><stop offset="1" stop-color="#f7a13c"/></linearGradient></defs><path d="M5 1.5 H10 Q12 1.500 12.600 3.500 L14.800 10 Q15.500 12.500 13 12.500 H11 L10 14.500 H6 Q4 14.500 3.400 12.500 L1.200 6 Q.5 3.500 3 3.500 H4.200 Z" fill="url(#cp1)"/><path d="M6 5 L8 11 H10.200 L8.200 5 Z" fill="#fff" opacity=".55"/></svg>
<!-- explorer -->
<svg class="abs" style="left:273.500px;top:532px" width="15" height="13" viewBox="0 0 15 13"><path d="M.5 1.500 H5.500 L7 3 H14.500 V12 H.5 Z" fill="#f5c84c"/><rect x=".5" y="4.200" width="14" height="8" fill="#fbd968"/><rect x="3.500" y="7.500" width="8" height="4.700" fill="#5aa7e8"/></svg>
<!-- blue circle app -->
<svg class="abs" style="left:304px;top:531px" width="15" height="15" viewBox="0 0 15 15"><circle cx="7.500" cy="7.500" r="7.200" fill="#1e9ce6"/><rect x="3.300" y="5" width="8.400" height="5.600" rx=".8" fill="#d9f0ff"/><rect x="4.800" y="3.600" width="1.200" height="2.400" fill="#d9f0ff"/><rect x="9" y="3.600" width="1.200" height="2.400" fill="#d9f0ff"/></svg>
<!-- chrome (active) -->
<div class="abs" style="left:327.500px;top:526.500px;width:29px;height:24.500px;background:#47484a"></div>
<div class="abs" style="left:327.500px;top:549px;width:29px;height:2px;background:#8fb6e8"></div>
<svg class="abs" style="left:335px;top:531.500px" width="14" height="14" viewBox="-6 -6 12 12">
<circle r="5.800" fill="#fbbc05"/>
<path d="M0 0 L-5.020 -2.900 A5.800 5.800 0 0 1 5.020 -2.900 Z" fill="#ea4335"/>
<path d="M0 0 L-5.020 -2.900 A5.800 5.800 0 0 0 0 5.800 Z" fill="#34a853"/>
<circle r="2.900" fill="#fff"/><circle r="2.200" fill="#4285f4"/>
</svg>
<!-- edge -->
<svg class="abs" style="left:364px;top:531px" width="15" height="15" viewBox="0 0 15 15"><defs><linearGradient id="eg1" x1="0" y1="0" x2="1" y2="1"><stop offset="0" stop-color="#35c1a0"/><stop offset=".55" stop-color="#1b86d6"/><stop offset="1" stop-color="#0b4ea2"/></linearGradient></defs><circle cx="7.500" cy="7.500" r="7.200" fill="url(#eg1)"/><path d="M3.500 9.500 A4 4 0 0 1 11.500 7.200 Q11.500 9 9.500 9 H7.200 Q7.500 11 10 11.300 Q7 13 4.800 11.300 Q3.600 10.400 3.500 9.500Z" fill="#0c3f86" opacity=".55"/></svg>
<!-- store -->
<svg class="abs" style="left:394px;top:530.500px" width="15" height="16" viewBox="0 0 15 16"><path d="M4.500 4 V2.500 Q4.500 1 6 1 H9 Q10.500 1 10.500 2.500 V4" fill="none" stroke="#d8e6f4" stroke-width="1"/><rect x=".8" y="4" width="13.400" height="11" rx="1.200" fill="#f2f5f8"/><rect x="4" y="6.500" width="3" height="3" fill="#f25022"/><rect x="7.800" y="6.500" width="3" height="3" fill="#7fba00"/><rect x="4" y="10.300" width="3" height="3" fill="#00a4ef"/><rect x="7.800" y="10.300" width="3" height="3" fill="#ffb900"/></svg>
<!-- teal app -->
<svg class="abs" style="left:423.500px;top:531.500px" width="15" height="14" viewBox="0 0 15 14"><path d="M1 2 Q4 1 6.500 4 L8 9 L5 13 Q1.500 10 1 2Z" fill="#1d7fd1"/><path d="M14 1.500 Q14.500 9 8 13 L5 13 Q6 7 9 3 Q11 1.200 14 1.500Z" fill="#25c4b4"/><path d="M8 5 Q11 3.500 13 4 Q12 9 8 12Z" fill="#dff" opacity=".7"/></svg>
<!-- doc -->
<svg class="abs" style="left:456.500px;top:531.500px" width="10" height="13" viewBox="0 0 10 13"><path d="M.5 .5 H6.800 L9.500 3.200 V12.500 H.5 Z" fill="#f4f4f4"/><path d="M6.800 .5 V3.200 H9.500" fill="#cfcfcf"/></svg>
<!-- instagram -->
<svg class="abs" style="left:484.500px;top:531.500px" width="14" height="14" viewBox="0 0 14 14"><defs><linearGradient id="ig1" x1="0" y1="1" x2="1" y2="0"><stop offset="0" stop-color="#fdb34a"/><stop offset=".45" stop-color="#e8336f"/><stop offset="1" stop-color="#8a3ac8"/></linearGradient></defs><rect width="14" height="14" rx="3.500" fill="url(#ig1)"/><rect x="2.800" y="2.800" width="8.400" height="8.400" rx="2.400" fill="none" stroke="#fff" stroke-width="1.100"/><circle cx="7" cy="7" r="2" fill="none" stroke="#fff" stroke-width="1.100"/><circle cx="9.800" cy="4.200" r=".6" fill="#fff"/></svg>
<!-- kakaotalk -->
<svg class="abs" style="left:514px;top:531px" width="15" height="15" viewBox="0 0 15 15"><rect width="15" height="15" rx="3" fill="#f9e000"/><ellipse cx="7.500" cy="7" rx="5.200" ry="3.900" fill="#3b1e1e"/><path d="M4.800 9.800 L4.200 12.300 L7 10.500Z" fill="#3b1e1e"/></svg>
<div class="abs" style="left:516.500px;top:535.300px;font-size:3.600px;line-height:4px;font-weight:bold;color:#f9e000;letter-spacing:-.1px">TALK</div>
<!-- photoshop -->
<div class="abs" style="left:539.500px;top:549px;width:25px;height:2px;background:#8fb6e8"></div>
<div class="abs" style="left:545px;top:531.500px;width:14px;height:13.500px;background:#0a1e5c;border:1px solid #7fa8f5;border-radius:1.500px;color:#9fc3ff;font-size:7.500px;font-weight:bold;line-height:11px;text-align:center">Ps</div>
<!-- tray -->
<svg class="abs" style="left:743.500px;top:532px" width="14" height="13" viewBox="0 0 14 13"><rect x="0" y="2" width="9" height="10" rx="1.500" fill="#5a4fe0" transform="rotate(-8 4 7)"/><rect x="3.500" y="1.500" width="10" height="10" rx="1.500" fill="#f0457a"/><rect x="5.200" y="3.600" width="3" height="2.600" fill="#fff"/><path d="M9.200 4 H12 M9.200 5.800 H12 M5.200 7.800 H12 M5.200 9.600 H12" stroke="#fff" stroke-width=".8"/></svg>
<div class="abs" style="left:762px;top:532px;font-size:9px;line-height:14px;color:#fff;white-space:nowrap;letter-spacing:.2px">뉴스 속보</div>
<svg class="abs" style="left:814px;top:533px" width="84" height="12" viewBox="0 0 84 12" fill="none" stroke="#fff" stroke-width="1">
<path d="M2 8 L5.300 4.500 L8.600 8" stroke-width="1.200"/>
<circle cx="20" cy="6.500" r="3.600"/><path d="M17.500 2 H22.500 M18.500 6.500 H21.500"/>
<rect x="30" y="4" width="8" height="5" fill="#fff"/><path d="M38.800 5.500 V7.500 M30.500 2.800 L32.500 4"/>
<path d="M46 9.500 A7 7 0 0 1 53 3 M47.800 9.500 A5 5 0 0 1 53 5 M49.800 9.500 A3 3 0 0 1 53 7" stroke-width=".9"/><circle cx="52.500" cy="9.300" r=".9" fill="#fff" stroke="none"/>
<path d="M60 5 H61.800 L64 3 V10 L61.800 8 H60 Z" fill="#fff" stroke="none"/><path d="M65.500 4.800 Q66.800 6.500 65.500 8.200 M67 3.500 Q69.200 6.500 67 9.500" stroke-width=".9"/>
<circle cx="78" cy="6.500" r="3.600" fill="#d9d9d9" stroke="none"/><path d="M76.500 5 L79.500 8 M79.500 5 L76.500 8" stroke="#222" stroke-width="1"/>
</svg>
<div class="abs" style="left:896px;top:527.500px;width:54px;text-align:center;font-size:8.600px;line-height:11px;color:#fff;white-space:nowrap">오후 7:10</div>
<div class="abs" style="left:896px;top:538.500px;width:54px;text-align:center;font-size:8.600px;line-height:11px;color:#fff;white-space:nowrap">2025-07-08</div>
<svg class="abs" style="left:958px;top:532px" width="13" height="13" viewBox="0 0 13 13"><path d="M.8 .8 H10.200 V7.500 H4.500 L2.500 9.500 V7.500 H.8 Z" fill="#fff"/><path d="M2.500 2.800 H8.500 M2.500 4.800 H8.500" stroke="#222" stroke-width=".7"/><circle cx="9" cy="9" r="3.600" fill="#2b2b2b" stroke="#fff" stroke-width=".8"/></svg>
<div class="abs" style="left:964.500px;top:537px;width:6px;font-size:5.500px;line-height:8px;color:#fff;text-align:center;font-weight:bold">2</div>
<!-- floating button peeking above the taskbar -->
<div class="abs" style="left:866px;top:523px;width:90px;height:4px;background:#1b3a6e;border-radius:3px 3px 0 0"></div>
<!-- ===== faint diagonal watermark ===== -->
<div class="wm" style="left:755.2px;top:114.1px;font-size:19.5px;line-height:23.4px;letter-spacing:5.1px;transform-origin:9.0px 50%;transform:rotate(-24.3deg);opacity:0.6">니다점포거래소</div>
<div class="wm" style="left:245.7px;top:372.3px;font-size:19.5px;line-height:23.4px;letter-spacing:3.6px;transform-origin:9.0px 50%;transform:rotate(-26deg);opacity:0.36">점포거래소</div>
<div class="wm" style="left:101.4px;top:439.3px;font-size:19.5px;line-height:23.4px;letter-spacing:3.6px;transform-origin:9.0px 50%;transform:rotate(-26deg);opacity:0.55">아파</div>
<div class="wm" style="left:689.0px;top:529.8px;font-size:19.5px;line-height:23.4px;letter-spacing:1.6px;transform-origin:9.0px 50%;transform:rotate(-22deg);opacity:0.6">까사장</div>
<div class="wm" style="left:232.8px;top:-5.9px;font-size:19.5px;line-height:23.4px;letter-spacing:3.1px;transform-origin:9.0px 50%;transform:rotate(-22deg);opacity:0.45">점포</div>

</body>
</html>
